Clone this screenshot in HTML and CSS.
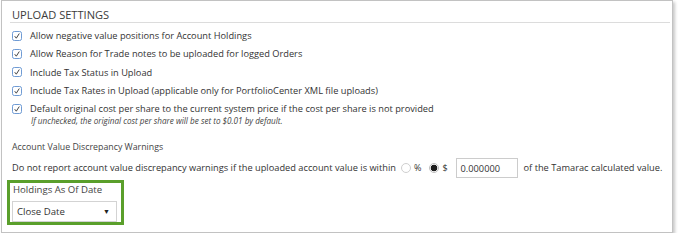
FILE: index.html
```html
<!DOCTYPE html>
<html>
<head>
<meta charset="utf-8">
<link rel="stylesheet" href="styles.css">
</head>
<body>
<div class="card">
  <div class="heading">UPLOAD SETTINGS</div>
  <div class="checks">
    <div class="row"><svg class="cb" viewBox="0 0 10 10"><rect x="0.5" y="0.5" width="9" height="9" rx="1.8" fill="#fff" stroke="#6f9bd4"/><path d="M2.7 5.2 L4.3 7.2 L7.3 2.5" fill="none" stroke="#444" stroke-width="1"/></svg><span>Allow negative value positions for Account Holdings</span></div>
    <div class="row"><svg class="cb" viewBox="0 0 10 10"><rect x="0.5" y="0.5" width="9" height="9" rx="1.8" fill="#fff" stroke="#6f9bd4"/><path d="M2.7 5.2 L4.3 7.2 L7.3 2.5" fill="none" stroke="#444" stroke-width="1"/></svg><span>Allow Reason for Trade notes to be uploaded for logged Orders</span></div>
    <div class="row"><svg class="cb" viewBox="0 0 10 10"><rect x="0.5" y="0.5" width="9" height="9" rx="1.8" fill="#fff" stroke="#6f9bd4"/><path d="M2.7 5.2 L4.3 7.2 L7.3 2.5" fill="none" stroke="#444" stroke-width="1"/></svg><span>Include Tax Status in Upload</span></div>
    <div class="row"><svg class="cb" viewBox="0 0 10 10"><rect x="0.5" y="0.5" width="9" height="9" rx="1.8" fill="#fff" stroke="#6f9bd4"/><path d="M2.7 5.2 L4.3 7.2 L7.3 2.5" fill="none" stroke="#444" stroke-width="1"/></svg><span>Include Tax Rates in Upload (applicable only for PortfolioCenter XML file uploads)</span></div>
    <div class="row"><svg class="cb" viewBox="0 0 10 10"><rect x="0.5" y="0.5" width="9" height="9" rx="1.8" fill="#fff" stroke="#6f9bd4"/><path d="M2.7 5.2 L4.3 7.2 L7.3 2.5" fill="none" stroke="#444" stroke-width="1"/></svg><span>Default original cost per share to the current system price if the cost per share is not provided</span></div>
  </div>
  <div class="note">If unchecked, the original cost per share will be set to $0.01 by default.</div>
  <div class="label">Account Value Discrepancy Warnings</div>
  <div class="disc">
    <span>Do not report account value discrepancy warnings if the uploaded account value is within</span>
    <span class="radio"></span><span class="rlab">%</span>
    <span class="radio on"></span><span class="rlab">$</span>
    <span class="input">0.000000</span>
    <span>of the Tamarac calculated value.</span>
  </div>
  <div class="hold">
    <div class="hlabel">Holdings As Of Date</div>
    <div class="select"><span>Close Date</span><span class="arrow">▼</span></div>
  </div>
</div>
</body>
</html>
```
FILE: styles.css
```css
html, body { margin: 0; padding: 0; background: #fff; }
body { font-family: "Open Sans", "Noto Sans", sans-serif; color: #333; font-size: 9.25px; }
.card {
  margin-left: 1px;
  height: 231px;
  border: 1px solid #c2c2c2;
  box-shadow: 2px 2px 3px rgba(0,0,0,0.22);
  padding: 0 2px 0 8px;
  box-sizing: content-box;
  width: 660px;
}
.heading {
  font-size: 11.1px;
  color: #3c3c3c;
  line-height: 12px;
  padding: 8px 0 0 2px;
  height: 13px;
  border-bottom: 1px solid #dcdcdc;
}
.checks { display: flex; flex-direction: column; padding-top: 3.5px; }
.row { display: flex; align-items: center; height: 18.3px; padding-left: 2px; }
.cb { width: 10px; height: 10px; margin-right: 8px; flex: none; }
.note { font-style: italic; font-size: 8.15px; padding-left: 21px; line-height: 10px; margin-top: -2px; color: #444; }
.label { margin-top: 15px; padding-left: 2px; line-height: 12px; color: #444; font-size: 8.8px; }
.disc { display: flex; align-items: center; padding-left: 2px; margin-top: 5px; height: 20px; }
.radio { width: 10px; height: 10px; border: 1px solid #cfcfcf; border-radius: 50%; box-sizing: border-box; margin-left: 5px; margin-right: 3px; flex: none; }
.radio.on { background: radial-gradient(circle, #1e1e1e 0 3.2px, #fff 3.6px); border-color: #bdbdbd; margin-left: 8px; }
.rlab { font-size: 9px; }
.input { width: 62px; height: 20px; border: 1px solid #ccc; box-sizing: border-box; margin: 0 6px 0 8px; padding-left: 4px; display: flex; align-items: center; padding-top: 2px; flex: none; }
.hold {
  width: 109px;
  height: 39px;
  border: 3px solid #5a9f2b;
  margin: 2px 0 0 -3px;
  padding: 0 0 0 2px;
  box-sizing: content-box;
}
.hlabel { line-height: 11px; padding: 1px 0 0 1px; color: #444; font-size: 9.6px; }
.select { margin-top: 6px; width: 105px; height: 21px; border: 1px solid #d3d3d3; box-sizing: border-box; display: flex; align-items: center; justify-content: space-between; padding: 0 6px 0 4px; font-size: 9.6px; }
.arrow { font-size: 7px; color: #222; }
```
